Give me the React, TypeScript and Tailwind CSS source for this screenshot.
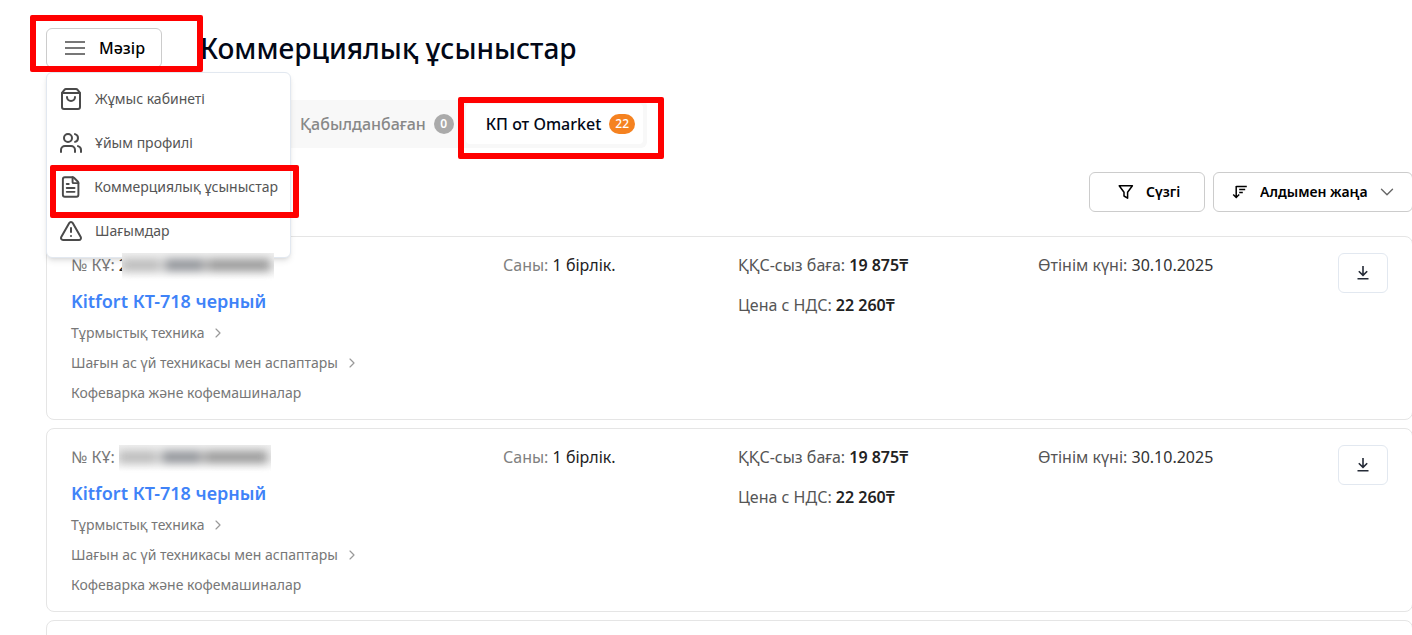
import { useState } from 'react';
import { ChevronDown, ChevronRight, FileText, ShoppingBag, TriangleAlert, Users } from 'lucide-react';

interface Offer {
  id: number;
  numberStart: string;
  quantity: string;
  priceWithoutVat: string;
  priceWithVat: string;
  date: string;
  title: string;
  categories: string[];
}

const categories = ['Тұрмыстық техника', 'Шағын ас үй техникасы мен аспаптары', 'Кофеварка және кофемашиналар'];

const offers: Offer[] = ['2', '', ''].map((numberStart, id) => ({
  id,
  numberStart,
  quantity: '1 бірлік.',
  priceWithoutVat: '19 875₸',
  priceWithVat: '22 260₸',
  date: '30.10.2025',
  title: 'Kitfort КТ-718 черный',
  categories,
}));

const menuItems = [
  { label: 'Жұмыс кабинеті', icon: ShoppingBag, marked: false },
  { label: 'Ұйым профилі', icon: Users, marked: false },
  { label: 'Коммерциялық ұсыныстар', icon: FileText, marked: true },
  { label: 'Шағымдар', icon: TriangleAlert, marked: false },
];

function BurgerIcon() {
  return (
    <svg width="20" height="14" viewBox="0 0 20 14" fill="none" stroke="#777777" strokeWidth="2">
      <path d="M0 1h20M0 7h20M0 13h20" />
    </svg>
  );
}

function FilterIcon() {
  return (
    <svg width="16" height="16" viewBox="0 0 16 16" fill="none" stroke="currentColor" strokeWidth="1.5" strokeLinejoin="round">
      <path d="M1.2 1.8h13.2L9.6 8.2v6L6 12V8.2z" />
    </svg>
  );
}

function SortIcon() {
  return (
    <svg width="16" height="16" viewBox="0 0 16 16" fill="none" stroke="currentColor" strokeWidth="1.5">
      <path d="M4.2 2v11.5M1.2 10.5l3 3 3-3M4.2 2.5h10.6M7.2 5.5h6M7.2 8.5h3.6" />
    </svg>
  );
}

function DownloadIcon() {
  return (
    <svg width="16" height="16" viewBox="0 0 16 16" fill="none" stroke="#252b37" strokeWidth="1.6">
      <path d="M8 1v9M3.8 6.2L8 10.4l4.2-4.2M2.5 13.8h11" />
    </svg>
  );
}

function Highlight({ className }: { className: string }) {
  return <div className={`pointer-events-none absolute z-30 rounded-xs border-6 border-[#ff0000] ${className}`} />;
}

// Offer numbers are hidden behind a smudge
function HiddenNumber() {
  return (
    <span className="relative z-20 flex h-7 w-[152px] items-center self-start overflow-hidden bg-linear-to-b from-[#f0f0f0] via-[#ebebeb] to-white to-95%">
      <span className="flex w-full items-center pb-1 blur-[4px]">
        <span className="h-3 w-9 bg-[#bdbdbd]" />
        <span className="h-3 w-2 bg-[#d0d0d0]" />
        <span className="h-3 w-9 bg-[#94979c]" />
        <span className="h-3 w-2 bg-[#b4b4b4]" />
        <span className="h-3 w-[60px] bg-[#9c9c9c]" />
      </span>
    </span>
  );
}

function OfferCard({ offer }: { offer: Offer }) {
  return (
    <article className="grid grid-cols-[432px_235px_300px_1fr_auto] items-start rounded-lg border border-[#e5e5e5] px-6 pt-4 pb-[11px] text-base text-[#555555]">
      <div>
        <div className="flex h-6 items-center text-[#777777]">
          <span className="mr-1">№ КҰ:</span>
          {offer.numberStart && <span className="w-[3px] overflow-hidden text-[#222222]">{offer.numberStart}</span>}
          <HiddenNumber />
        </div>
        <a href="#" className="mt-3 block text-lg leading-6 font-semibold text-[#3f83f8]">
          {offer.title}
        </a>
        <ul className="mt-[5px] text-sm text-[#777777]">
          {offer.categories.map((category, i) => (
            <li key={category} className="flex h-[30px] items-center gap-[6px]">
              {category}
              {i < offer.categories.length - 1 && <ChevronRight size={16} strokeWidth={1.75} className="text-[#999999]" />}
            </li>
          ))}
        </ul>
      </div>
      <p>
        <span className="text-[#808080]">Саны:</span> <span className="text-[#222222]">{offer.quantity}</span>
      </p>
      <div className="space-y-4">
        <p>
          ҚҚС-сыз баға: <span className="font-semibold text-[#222222]">{offer.priceWithoutVat}</span>
        </p>
        <p>
          Цена с НДС: <span className="font-semibold text-[#222222]">{offer.priceWithVat}</span>
        </p>
      </div>
      <p>
        Өтінім күні: <span className="text-[#333333]">{offer.date}</span>
      </p>
      <button aria-label="Жүктеу" className="flex h-10 w-[50px] items-center justify-center rounded-md border border-[#e2e8f0]">
        <DownloadIcon />
      </button>
    </article>
  );
}

export default function App() {
  const [menuOpen, setMenuOpen] = useState(true);

  return (
    <div className="h-screen overflow-hidden bg-white pt-7 pl-[46px] font-['Noto_Sans','Open_Sans',sans-serif]">
      <header className="flex h-10 items-center gap-[38px]">
        <div className="relative">
          <button
            onClick={() => setMenuOpen(!menuOpen)}
            className="flex h-10 w-[116px] items-center gap-[14px] rounded-md border border-[#cccccc] pl-[18px] text-base font-medium text-black"
          >
            <BurgerIcon />
            Мәзір
          </button>
          <Highlight className="-top-[13px] -left-4 h-[57px] w-[173px]" />
          {menuOpen && (
            <nav className="absolute top-11 left-0 z-20 w-[245px] rounded-md border border-[#e2e8f0] bg-white py-1 shadow-md">
              {menuItems.map(({ label, icon: Icon, marked }) => (
                <a key={label} href="#" className="relative flex h-11 items-center gap-3 px-3 text-sm whitespace-nowrap text-[#555555]">
                  <Icon size={24} strokeWidth={2} className="text-[#4a4a4a]" />
                  {label}
                  {marked && <Highlight className="top-0 left-[3px] h-[53px] w-[249px]" />}
                </a>
              ))}
            </nav>
          )}
        </div>
        <h1 className="text-[28px] leading-10 font-medium text-[#020817]">Коммерциялық ұсыныстар</h1>
      </header>

      <div className="mt-8 flex h-12 w-fit items-center rounded-md bg-[#f8f8f8] p-1 pl-[254px]">
        <button className="flex items-center gap-2 pr-3 text-base font-medium text-[#888888]">
          Қабылданбаған
          <span className="flex h-5 w-5 items-center justify-center rounded-full bg-[#aaaaaa] text-xs font-semibold text-white">0</span>
        </button>
        <button className="relative flex h-10 items-center gap-2 rounded-sm bg-white pr-2 pl-5 text-base font-medium text-[#020817]">
          КП от Omarket
          <span className="flex h-5 items-center rounded-full bg-[#f58220] px-[6px] text-xs font-medium text-white">22</span>
          <Highlight className="-top-[7px] -left-2 h-[62px] w-[206px]" />
        </button>
      </div>

      <div className="mt-6 -mr-px flex justify-end gap-2 text-sm font-semibold text-black">
        <button className="flex h-10 w-[116px] items-center gap-3 rounded-md border border-[#cccccc] pl-7">
          <FilterIcon />
          Сүзгі
        </button>
        <label className="flex h-10 w-[200px] items-center gap-3 rounded-md border border-[#cccccc] pr-[14px] pl-[18px]">
          <SortIcon />
          <select aria-label="Сұрыптау" className="min-w-0 flex-1 appearance-none">
            <option>Алдымен жаңа</option>
          </select>
          <ChevronDown size={22} strokeWidth={1.5} className="-ml-3 shrink-0 text-[#666666]" />
        </label>
      </div>

      <main className="mt-6 -mr-px flex flex-col gap-2">
        {offers.map(offer => (
          <OfferCard key={offer.id} offer={offer} />
        ))}
      </main>
    </div>
  );
}
